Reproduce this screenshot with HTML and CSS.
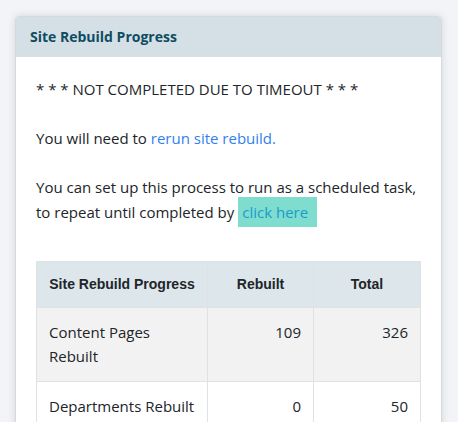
FILE: index.html
```html
<!DOCTYPE html>
<html lang="en">
<head>
  <meta charset="UTF-8" />
  <title>Site Rebuild Progress</title>
  <link rel="stylesheet" href="styles.css">
</head>
<body>
  <div class="card">
    <div class="card-header">Site Rebuild Progress</div>
    <div class="card-body">
      <p>* * * NOT COMPLETED DUE TO TIMEOUT * * *</p>
      <p>You will need to <a href="#" class="link">rerun site rebuild.</a></p>
      <p>You can set up this process to run as a scheduled task, to repeat until completed by<a href="#" class="link highlight">click here</a></p>

      <table class="progress">
        <thead>
          <tr>
            <th>Site Rebuild Progress</th>
            <th>Rebuilt</th>
            <th>Total</th>
          </tr>
        </thead>
        <tbody>
          <tr class="odd">
            <td>Content Pages Rebuilt</td>
            <td class="num">109</td>
            <td class="num">326</td>
          </tr>
          <tr>
            <td>Departments Rebuilt</td>
            <td class="num">0</td>
            <td class="num">50</td>
          </tr>
        </tbody>
      </table>
    </div>
  </div>
</body>
</html>
```

FILE: styles.css
```css
body {
  font-family: "Open Sans", "Noto Sans", sans-serif;
  background: #f3f4f7;
  margin: 0;
  padding: 16px 16px 16px 15px;
  color: #212529;
}

.card {
  background: white;
  border: 1px solid #d6dadf;
  border-radius: 4px;
  box-shadow: 0 0 8px rgba(0, 0, 0, 0.12);
  overflow: hidden;
}

.card-header {
  background: #d4e0e5;
  color: #0f4c61;
  font-weight: bold;
  font-size: 14px;
  height: 40px;
  line-height: 40px;
  padding: 0 14px;
}

.card-body {
  padding: 20px 20px 20px 20px;
  font-size: 15px;
  line-height: 24.5px;
}

.card-body p {
  margin: 0 0 24.5px;
}

.link {
  color: #2f7ff0;
  text-decoration: none;
}

.highlight {
  background: #7fddcf;
  color: #1a9cc7;
  padding: 5px 9px 5px 4px;
  margin-left: 4px;
}

.progress {
  width: 100%;
  border-collapse: collapse;
  margin-top: 37px;
}

.progress th,
.progress td {
  border: 1px solid #dee2e6;
  padding: 12px;
}

.progress th {
  background: #dde7eb;
  font-family: "Liberation Sans", Arial, sans-serif;
  font-size: 14px;
  text-align: center;
  padding: 10px 12px;
}

.progress th:first-child {
  width: 146px;
}

.progress th:nth-child(2) {
  width: 81px;
}

.progress tr.odd td {
  background: #f2f2f2;
}

.progress td {
  vertical-align: top;
}

.progress td.num {
  text-align: right;
}
```
